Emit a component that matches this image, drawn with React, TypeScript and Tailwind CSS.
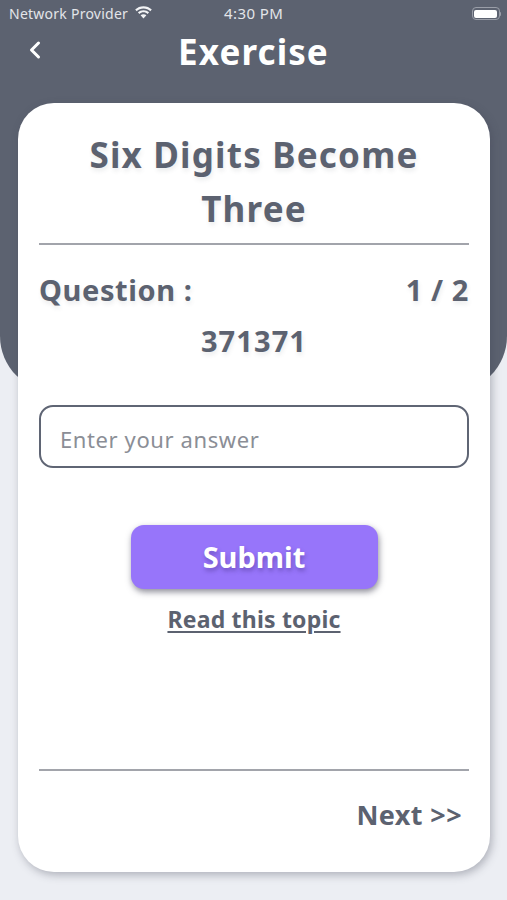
import { ChevronLeft } from 'lucide-react';

const font = { fontFamily: '"Noto Sans", "Open Sans", sans-serif' };

function StatusBar() {
  return (
    <div className="relative flex h-[27px] items-center text-[14px] text-[#e3e5e9]">
      <span className="ml-[9px] tracking-[0.25px]">Network Provider</span>
      <svg className="ml-[6px] mb-[2px]" width="19" height="14" viewBox="0 0 19 14" fill="#f2f3f5" aria-hidden>
        <path d="M9.500 2.400c2.600 0 5 1 6.800 2.800l1.500-1.600C15.600 1.500 12.700.3 9.500.3S3.400 1.500 1.200 3.600l1.500 1.600C4.500 3.400 6.900 2.400 9.500 2.400z" />
        <path d="M9.500 6.300c1.600 0 3 .6 4.100 1.600l1.500-1.600C13.600 5 11.600 4.200 9.500 4.200S5.400 5 3.900 6.300l1.500 1.600c1.100-1 2.500-1.600 4.100-1.600z" />
        <path d="M9.500 8.200c-1.100 0-2.100.4-2.900 1.100l2.900 3.300 2.900-3.300c-.8-.7-1.800-1.100-2.900-1.100z" />
      </svg>
      <span className="absolute left-[224px] text-[15px] tracking-[0.4px]">4:30 PM</span>
      <div className="absolute right-[6px] top-[7px] flex items-center">
        <div className="h-[13px] w-[28px] rounded-[4px] border border-[#9a9ea8] p-[1.500px]">
          <div className="h-full w-full rounded-[2px] bg-white" />
        </div>
        <div className="h-[4px] w-[1.500px] rounded-r-full bg-[#9a9ea8]" />
      </div>
    </div>
  );
}

export default function App() {
  return (
    <div className="h-[900px] overflow-hidden bg-[#eceef3]" style={font}>
      <div className="h-[392px] rounded-b-[56px] bg-[#5c6270]">
        <StatusBar />
        <div className="relative flex h-[48px] items-center justify-center">
          <ChevronLeft className="absolute left-[21px] top-[9px] text-white" size={28} strokeWidth={2.6} aria-hidden />
          <h1 className="text-[35px] leading-none font-bold tracking-[1.100px] text-white">Exercise</h1>
        </div>
      </div>

      <div className="ml-[18px] mr-[17px] -mt-[289px] flex h-[769px] flex-col rounded-[36px] bg-white px-[21px] shadow-[2px_3px_8px_rgba(60,64,80,0.35)]">
        <h2 className="mt-[25px] text-center text-[35px] leading-[54px] font-bold tracking-[1.200px] text-[#5c6270] [text-shadow:1px_3px_4px_rgba(70,75,90,0.1)]">
          Six Digits Become
          <br />
          Three
        </h2>
        <div className="mt-[7px] h-[2px] bg-[#a2a4ab]" />
        <div className="mt-[25px] flex items-center justify-between text-[29px] leading-[40px] font-bold tracking-[0.6px] text-[#5c6270] [text-shadow:1px_3px_4px_rgba(70,75,90,0.1)]">
          <span>Question :</span>
          <span>1 / 2</span>
        </div>
        <p className="mt-[11px] text-center text-[29px] leading-[40px] font-bold tracking-[1.100px] text-[#5c6270] [text-shadow:1px_3px_4px_rgba(70,75,90,0.1)]">
          371371
        </p>
        <div className="mt-[44px] flex h-[63px] items-center rounded-[14px] border-2 border-[#5f6574] pl-[19px] pt-[5px] text-[22px] tracking-[0.6px] text-[#8b8e96]">
          Enter your answer
        </div>
        <button
          type="button"
          className="mx-auto mt-[57px] flex h-[64px] w-[247px] items-center justify-center rounded-[13px] bg-[#9775fa] text-[29px] font-bold text-white shadow-[1px_3px_6px_rgba(50,50,70,0.55)] [text-shadow:1px_3px_4px_rgba(60,40,120,0.4)]"
        >
          Submit
        </button>
        <a className="mt-[14px] text-center text-[23px] leading-[32px] font-bold tracking-[0.2px] text-[#5c6270] underline underline-offset-[3px]">
          Read this topic
        </a>
        <div className="mt-[134px] h-[2px] bg-[#a2a4ab]" />
        <div className="mt-[24px] pr-[7px] text-right text-[27px] leading-[40px] font-bold tracking-[0.4px] text-[#5c6270]">Next &gt;&gt;</div>
      </div>
    </div>
  );
}
